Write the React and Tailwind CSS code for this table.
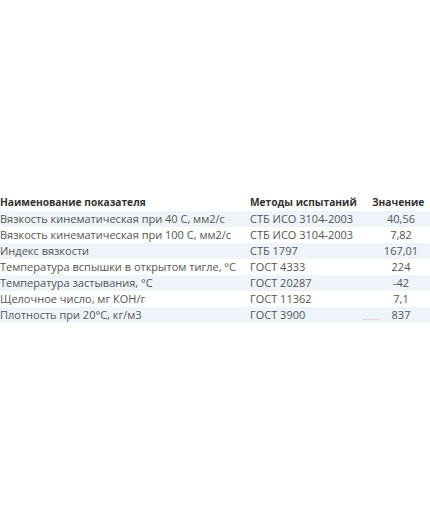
import React from 'react';

const rows = [
  ['Вязкость кинематическая при 40 С, мм2/с', 'СТБ ИСО 3104-2003', '40,56'],
  ['Вязкость кинематическая при 100 С, мм2/с', 'СТБ ИСО 3104-2003', '7,82'],
  ['Индекс вязкости', 'СТБ 1797', '167,01'],
  ['Температура вспышки в открытом тигле, °С', 'ГОСТ 4333', '224'],
  ['Температура застывания, °С', 'ГОСТ 20287', '-42'],
  ['Щелочное число, мг КОН/г', 'ГОСТ 11362', '7,1'],
  ['Плотность при 20°С, кг/м3', 'ГОСТ 3900', '837'],
];

export default function App() {
  return (
    <div className="w-[430px] h-[520px] bg-white pt-[195px] font-['Open_Sans',sans-serif] text-[11px] text-[#555]">
      <div className="grid grid-cols-[250px_122px_1fr] h-4 items-center text-[10.2px] font-bold text-[#333]">
        <div>Наименование показателя</div>
        <div>Методы испытаний</div>
        <div>Значение</div>
      </div>
      {rows.map((r, i) => (
        <div
          key={i}
          className={`relative grid grid-cols-[250px_122px_1fr] h-4 items-center ${i % 2 === 0 ? 'bg-[#eef4fa]' : 'bg-white'}`}
        >
          <div className="whitespace-nowrap">{r[0]}</div>
          <div className="whitespace-nowrap">{r[1]}</div>
          <div className="text-center">{r[2]}</div>
          {i === 6 && <span className="absolute left-[362px] bottom-[3px] w-[18px] h-px bg-[#f0d4d8]" />}
        </div>
      ))}
    </div>
  );
}
